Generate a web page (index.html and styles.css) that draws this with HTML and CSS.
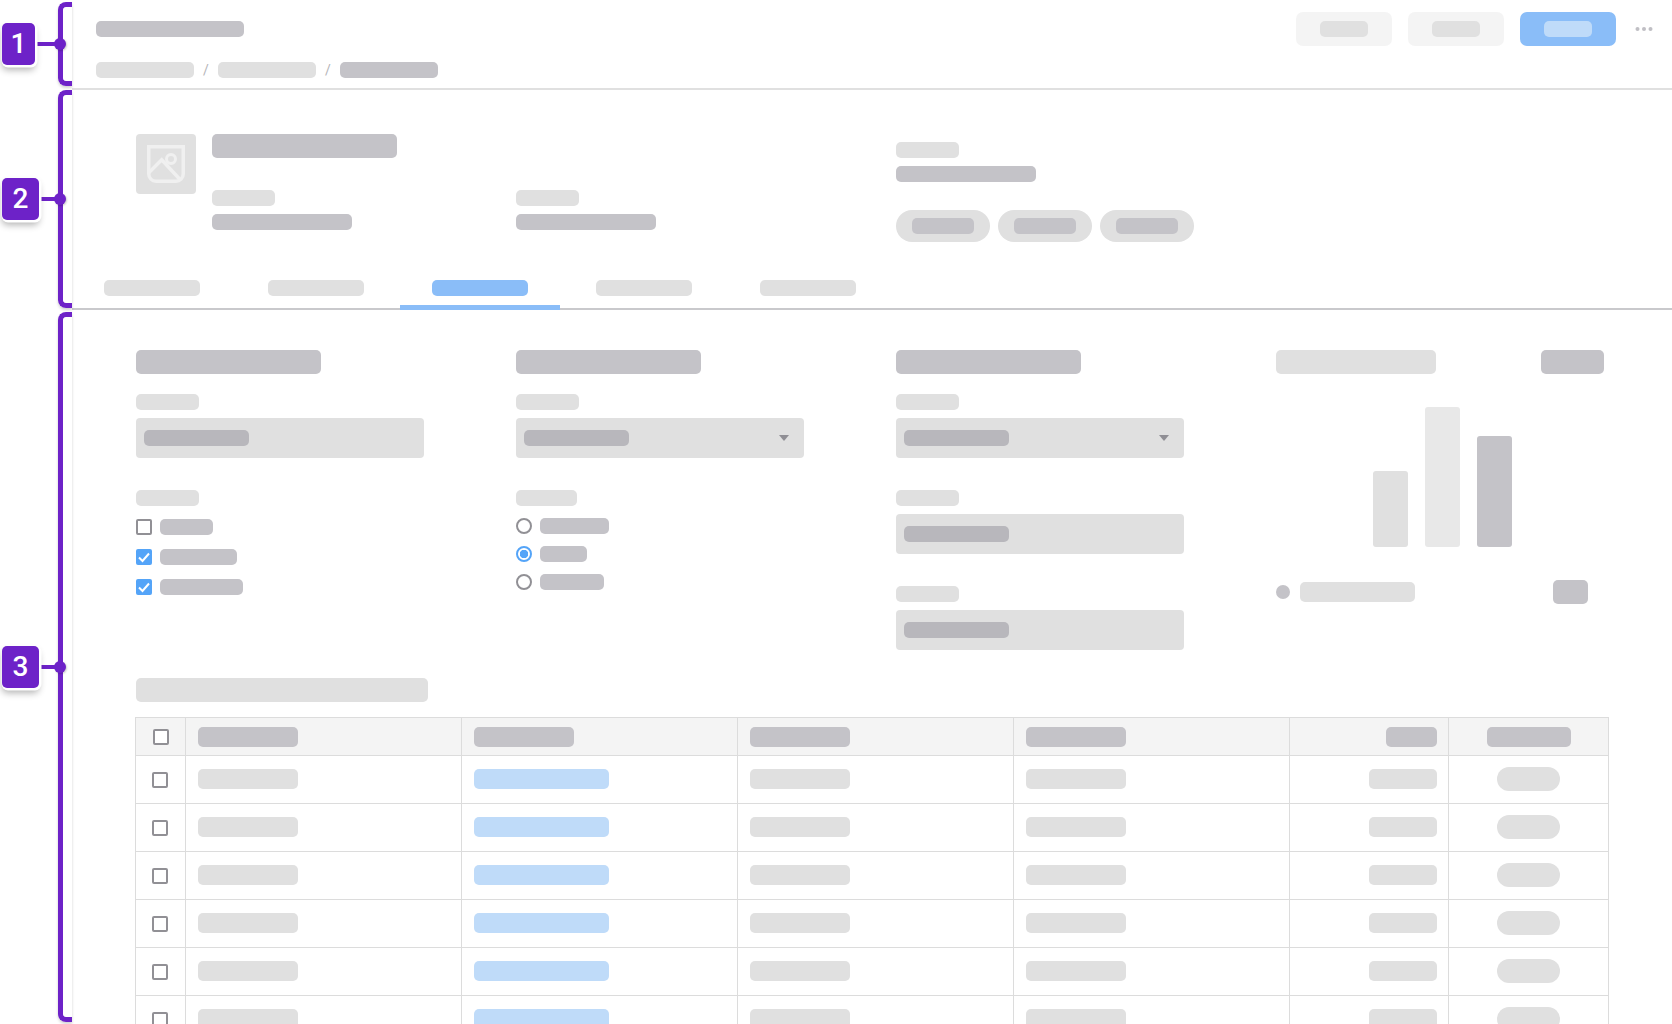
FILE: index.html
```html
<!DOCTYPE html>
<html lang="en">
<head>
<meta charset="utf-8">
<title>Record page wireframe</title>
<link rel="stylesheet" href="styles.css">
</head>
<body>
<div class="page">
  <header class="topbar">
    <div class="topbar-row">
      <span class="sk dark w148 h16"></span>
      <div class="actions">
        <span class="btn"><span class="sk light w48 h16"></span></span>
        <span class="btn"><span class="sk light w48 h16"></span></span>
        <span class="btn primary"><span class="sk pale w48 h16"></span></span>
        <svg class="dots" width="18" height="6" viewBox="0 0 18 6"><circle cx="2.500" cy="3" r="2"/><circle cx="9" cy="3" r="2"/><circle cx="15.500" cy="3" r="2"/></svg>
      </div>
    </div>
    <nav class="crumbs">
      <span class="sk light w98 h16"></span><span class="slash">/</span>
      <span class="sk light w98 h16"></span><span class="slash">/</span>
      <span class="sk dark w98 h16"></span>
    </nav>
  </header>

  <section class="summary">
    <div class="summary-grid">
      <div class="identity">
        <div class="thumb">
          <svg width="38" height="38" viewBox="0 0 38 38" fill="none" stroke="#f0f0f0" stroke-width="3.500">
            <path d="M1.750 1.750H36.250V29A7.250 7.250 0 0 1 29 36.250H9A7.250 7.250 0 0 1 1.750 29Z"/>
            <path d="M1.500 28L14.700 14.700L33.500 35"/>
            <circle cx="24" cy="14" r="4.500" stroke-width="3"/>
          </svg>
        </div>
        <div>
          <span class="sk dark w185 h24 block"></span>
          <span class="sk light w63 h16 block mt32"></span>
          <span class="sk dark w140 h16 block mt8"></span>
        </div>
      </div>
      <div class="mt56">
        <span class="sk light w63 h16 block"></span>
        <span class="sk dark w140 h16 block mt8"></span>
      </div>
      <div class="mt8">
        <span class="sk light w63 h16 block"></span>
        <span class="sk dark w140 h16 block mt8"></span>
        <div class="chips">
          <span class="chip"><span class="sk dark w62 h16"></span></span>
          <span class="chip"><span class="sk dark w62 h16"></span></span>
          <span class="chip"><span class="sk dark w62 h16"></span></span>
        </div>
      </div>
    </div>
    <div class="tabs">
      <span class="tab"><span class="sk light w96 h16"></span></span>
      <span class="tab"><span class="sk light w96 h16"></span></span>
      <span class="tab active"><span class="sk blue w96 h16"></span></span>
      <span class="tab"><span class="sk light w96 h16"></span></span>
      <span class="tab"><span class="sk light w96 h16"></span></span>
    </div>
  </section>

  <main class="content">
    <div class="form-grid">
      <div>
        <span class="sk dark w185 h24 block"></span>
        <span class="sk light w63 h16 block mt20"></span>
        <div class="field"><span class="sk mid w105 h16"></span></div>
        <span class="sk light w63 h16 block mt32"></span>
        <ul class="checks">
          <li><span class="box"></span><span class="sk dark w53 h16"></span></li>
          <li><span class="box on"><svg width="16" height="16" viewBox="0 0 16 16" fill="none" stroke="#fff" stroke-width="2"><path d="M3 8.500L6.500 12L13 4.500"/></svg></span><span class="sk dark w77 h16"></span></li>
          <li><span class="box on"><svg width="16" height="16" viewBox="0 0 16 16" fill="none" stroke="#fff" stroke-width="2"><path d="M3 8.500L6.500 12L13 4.500"/></svg></span><span class="sk dark w83 h16"></span></li>
        </ul>
      </div>
      <div>
        <span class="sk dark w185 h24 block"></span>
        <span class="sk light w63 h16 block mt20"></span>
        <div class="field select"><span class="sk mid w105 h16"></span><span class="caret"></span></div>
        <span class="sk light w61 h16 block mt32"></span>
        <ul class="radios">
          <li><span class="radio"></span><span class="sk dark w69 h16"></span></li>
          <li><span class="radio on"></span><span class="sk dark w47 h16"></span></li>
          <li><span class="radio"></span><span class="sk dark w64 h16"></span></li>
        </ul>
      </div>
      <div>
        <span class="sk dark w185 h24 block"></span>
        <span class="sk light w63 h16 block mt20"></span>
        <div class="field select"><span class="sk mid w105 h16"></span><span class="caret"></span></div>
        <span class="sk light w63 h16 block mt32"></span>
        <div class="field"><span class="sk mid w105 h16"></span></div>
        <span class="sk light w63 h16 block mt32"></span>
        <div class="field"><span class="sk mid w105 h16"></span></div>
      </div>
      <div class="chart-col">
        <div class="chart-head"><span class="sk light w160 h24"></span><span class="sk dark w63 h24"></span></div>
        <div class="bars">
          <span class="bar b1"></span>
          <span class="bar b2"></span>
          <span class="bar b3"></span>
        </div>
        <div class="legend">
          <span class="legend-dot"></span>
          <span class="sk light w115 h20"></span>
          <span class="sk dark w35 h24 legend-value"></span>
        </div>
      </div>
    </div>

    <span class="sk light w292 h24 block table-title"></span>
    <div class="table">
      <div class="row head">
        <div class="cell check"><span class="box nudge"></span></div>
        <div class="cell"><span class="sk dark w100 h20"></span></div>
        <div class="cell"><span class="sk dark w100 h20"></span></div>
        <div class="cell"><span class="sk dark w100 h20"></span></div>
        <div class="cell"><span class="sk dark w100 h20"></span></div>
        <div class="cell end"><span class="sk dark w51 h20"></span></div>
        <div class="cell mid-cell"><span class="sk dark w84 h20"></span></div>
      </div>
      <div class="row">
        <div class="cell check"><span class="box"></span></div>
        <div class="cell"><span class="sk light w100 h20"></span></div>
        <div class="cell"><span class="sk pale w135 h20"></span></div>
        <div class="cell"><span class="sk light w100 h20"></span></div>
        <div class="cell"><span class="sk light w100 h20"></span></div>
        <div class="cell end"><span class="sk light w68 h20"></span></div>
        <div class="cell mid-cell"><span class="pill"></span></div>
      </div>
      <div class="row">
        <div class="cell check"><span class="box"></span></div>
        <div class="cell"><span class="sk light w100 h20"></span></div>
        <div class="cell"><span class="sk pale w135 h20"></span></div>
        <div class="cell"><span class="sk light w100 h20"></span></div>
        <div class="cell"><span class="sk light w100 h20"></span></div>
        <div class="cell end"><span class="sk light w68 h20"></span></div>
        <div class="cell mid-cell"><span class="pill"></span></div>
      </div>
      <div class="row">
        <div class="cell check"><span class="box"></span></div>
        <div class="cell"><span class="sk light w100 h20"></span></div>
        <div class="cell"><span class="sk pale w135 h20"></span></div>
        <div class="cell"><span class="sk light w100 h20"></span></div>
        <div class="cell"><span class="sk light w100 h20"></span></div>
        <div class="cell end"><span class="sk light w68 h20"></span></div>
        <div class="cell mid-cell"><span class="pill"></span></div>
      </div>
      <div class="row">
        <div class="cell check"><span class="box"></span></div>
        <div class="cell"><span class="sk light w100 h20"></span></div>
        <div class="cell"><span class="sk pale w135 h20"></span></div>
        <div class="cell"><span class="sk light w100 h20"></span></div>
        <div class="cell"><span class="sk light w100 h20"></span></div>
        <div class="cell end"><span class="sk light w68 h20"></span></div>
        <div class="cell mid-cell"><span class="pill"></span></div>
      </div>
      <div class="row">
        <div class="cell check"><span class="box"></span></div>
        <div class="cell"><span class="sk light w100 h20"></span></div>
        <div class="cell"><span class="sk pale w135 h20"></span></div>
        <div class="cell"><span class="sk light w100 h20"></span></div>
        <div class="cell"><span class="sk light w100 h20"></span></div>
        <div class="cell end"><span class="sk light w68 h20"></span></div>
        <div class="cell mid-cell"><span class="pill"></span></div>
      </div>
      <div class="row">
        <div class="cell check"><span class="box"></span></div>
        <div class="cell"><span class="sk light w100 h20"></span></div>
        <div class="cell"><span class="sk pale w135 h20"></span></div>
        <div class="cell"><span class="sk light w100 h20"></span></div>
        <div class="cell"><span class="sk light w100 h20"></span></div>
        <div class="cell end"><span class="sk light w68 h20"></span></div>
        <div class="cell mid-cell"><span class="pill"></span></div>
      </div>
    </div>
  </main>

  <aside class="note n1">
    <span class="bracket"></span><span class="bracket-dot"></span><span class="stem"></span><span class="badge">1</span>
  </aside>
  <aside class="note n2">
    <span class="bracket"></span><span class="bracket-dot"></span><span class="stem"></span><span class="badge">2</span>
  </aside>
  <aside class="note n3">
    <span class="bracket"></span><span class="bracket-dot"></span><span class="stem"></span><span class="badge">3</span>
  </aside>
</div>
</body>
</html>
```
FILE: styles.css
```css
* { box-sizing: border-box; }
html, body { margin: 0; padding: 0; background: #fff; }
body { font-family: "Roboto", "Liberation Sans", sans-serif; }
ul { list-style: none; margin: 0; padding: 0; }

.page { position: relative; width: 1672px; height: 1024px; overflow: hidden; padding-left: 72px; }

/* skeleton blocks */
.sk { display: inline-block; border-radius: 5px; flex: none; }
.block { display: block; }
.dark { background: #c4c3c8; }
.light { background: #e0e0e0; }
.mid { background: #b8b7bc; }
.pale { background: #bfdbf9; }
.blue { background: #8abdf8; }
.h16 { height: 16px; }
.h20 { height: 20px; }
.h24 { height: 24px; }
.w35 { width: 35px; }
.w47 { width: 47px; }
.w48 { width: 48px; }
.w51 { width: 51px; }
.w53 { width: 53px; }
.w61 { width: 61px; }
.w62 { width: 62px; }
.w63 { width: 63px; }
.w64 { width: 64px; }
.w68 { width: 68px; }
.w69 { width: 69px; }
.w77 { width: 77px; }
.w83 { width: 83px; }
.w84 { width: 84px; }
.w96 { width: 96px; }
.w98 { width: 98px; }
.w100 { width: 100px; }
.w105 { width: 105px; }
.w115 { width: 115px; }
.w135 { width: 135px; }
.w140 { width: 140px; }
.w148 { width: 148px; }
.w160 { width: 160px; }
.w185 { width: 185px; }
.w292 { width: 292px; }
.mt8 { margin-top: 8px; }
.mt20 { margin-top: 20px; }
.mt32 { margin-top: 32px; }
.mt56 { margin-top: 56px; }

/* top bar */
.topbar { height: 90px; padding: 12px 19px 0 24px; border-bottom: 2px solid #e0e0e0; }
.topbar-row { display: flex; align-items: center; justify-content: space-between; height: 34px; }
.actions { display: flex; align-items: center; gap: 16px; }
.btn { display: flex; align-items: center; justify-content: center; width: 96px; height: 34px; border-radius: 7px; background: #f4f4f4; }
.btn.primary { background: #8abdf8; }
.dots { fill: #c0bfc4; margin-left: 3px; }
.crumbs { display: flex; align-items: center; margin-top: 16px; height: 16px; }
.slash { width: 24px; text-align: center; font-size: 14px; line-height: 16px; color: #b5b5b8; }

/* summary */
.summary { height: 220px; padding: 44px 0 0 0; border-bottom: 2px solid #c9c9cc; }
.summary-grid { display: grid; grid-template-columns: 380px 380px 1fr; height: 108px; padding-left: 64px; }
.identity { display: flex; gap: 16px; }
.thumb { display: flex; align-items: center; justify-content: center; width: 60px; height: 60px; border-radius: 4px; background: #e0e0e0; }
.chips { display: flex; gap: 8px; margin-top: 28px; }
.chip { display: flex; align-items: center; justify-content: center; width: 94px; height: 32px; border-radius: 16px; background: #e0e0e0; }
.tabs { display: flex; gap: 4px; margin-top: 22px; }
.tab { display: block; width: 160px; height: 46px; padding: 16px 32px 0; border-bottom: 5px solid transparent; }
.tab.active { border-bottom-color: #8abdf8; }
.tab .sk { display: block; }

/* form */
.content { padding: 40px 0 0 64px; }
.form-grid { display: grid; grid-template-columns: 380px 380px 380px 328px; height: 300px; }
.field { display: flex; align-items: center; justify-content: space-between; width: 288px; height: 40px; margin-top: 8px; padding: 0 8px; border-radius: 4px; background: #e0e0e0; }
.caret { width: 0; height: 0; margin-right: 7px; border-style: solid; border-width: 6px 5px 0; border-color: #8f8e94 transparent transparent; }
.checks { margin-top: 13px; display: flex; flex-direction: column; gap: 14px; }
.radios { margin-top: 12px; display: flex; flex-direction: column; gap: 12px; }
.checks li, .radios li { display: flex; align-items: center; gap: 8px; height: 16px; }
.box { display: block; flex: none; width: 16px; height: 16px; border: 2px solid #919095; border-radius: 2px; background: #fff; }
.box.on { border: 0; background: #54a4f8; }
.box svg { display: block; }
.box.nudge { margin-left: 1px; }
.radio { display: block; flex: none; width: 16px; height: 16px; border: 2px solid #919095; border-radius: 50%; background: #fff; }
.radio.on { border-color: #54a4f8; background: radial-gradient(circle, #54a4f8 0, #54a4f8 4px, #fff 4.500px); }

/* chart */
.chart-head { display: flex; justify-content: space-between; }
.bars { display: flex; align-items: flex-end; gap: 17px; height: 140px; margin: 33px 0 0 97px; }
.bar { display: block; width: 35px; border-radius: 3px; }
.b1 { height: 76px; background: #e0e0e0; }
.b2 { height: 140px; background: #e8e8e8; }
.b3 { height: 111px; background: #c4c3c8; }
.legend { display: flex; align-items: center; height: 24px; margin-top: 33px; gap: 10px; }
.legend-dot { display: block; width: 14px; height: 14px; border-radius: 50%; background: #c4c3c8; }
.legend-value { margin-left: auto; margin-right: 16px; }

/* table */
.table-title { margin-top: 28px; }
.table { width: 1474px; margin: 15px 0 0 -1px; border-top: 1px solid #dcdcdc; }
.row { display: grid; grid-template-columns: 50px 276px 276px 276px 276px 159px 161px; height: 48px; border-bottom: 1px solid #dcdcdc; }
.row.head { height: 38px; background: #f4f4f4; }
.cell { display: flex; align-items: center; padding: 0 12px 1px; border-left: 1px solid #dcdcdc; }
.head .cell { padding-bottom: 0; }
.cell:last-child { border-right: 1px solid #dcdcdc; }
.cell.check { padding: 0 0 0 16px; }
.cell.end { justify-content: flex-end; padding-right: 11px; }
.cell.mid-cell { justify-content: center; }
.pill { display: block; width: 63px; height: 24px; border-radius: 12px; background: #e0e0e0; }

/* annotation overlay */
.note { position: absolute; left: 0; width: 72px; }
.n1 { top: 2px; height: 84px; }
.n2 { top: 90px; height: 218px; }
.n3 { top: 312px; height: 710px; }
.bracket { position: absolute; left: 58px; top: 0; bottom: 0; width: 14px; border: 5px solid #6d22c8; border-right: 0; border-radius: 8px 0 0 8px; box-shadow: 0 2px 3px rgba(0,0,0,.18); }
.bracket-dot { position: absolute; left: 54px; top: 50%; width: 12px; height: 12px; margin-top: -6px; border-radius: 50%; background: #6d22c8; box-shadow: 1px 1px 2px rgba(0,0,0,.2); }
.stem { position: absolute; left: 30px; top: 50%; width: 28px; height: 4px; margin-top: -2px; background: #6d22c8; }
.badge { position: absolute; left: 2px; top: 50%; display: flex; align-items: center; justify-content: center; width: 37px; height: 42px; margin-top: -21px; border-radius: 5px; background: #6d22c8; color: #fff; font-size: 28px; font-weight: 500; line-height: 1; box-shadow: 1px 1px 0 1.500px #fff, 0 5px 7px rgba(0,0,0,.3); }
.n1 .badge { width: 33px; }
```
